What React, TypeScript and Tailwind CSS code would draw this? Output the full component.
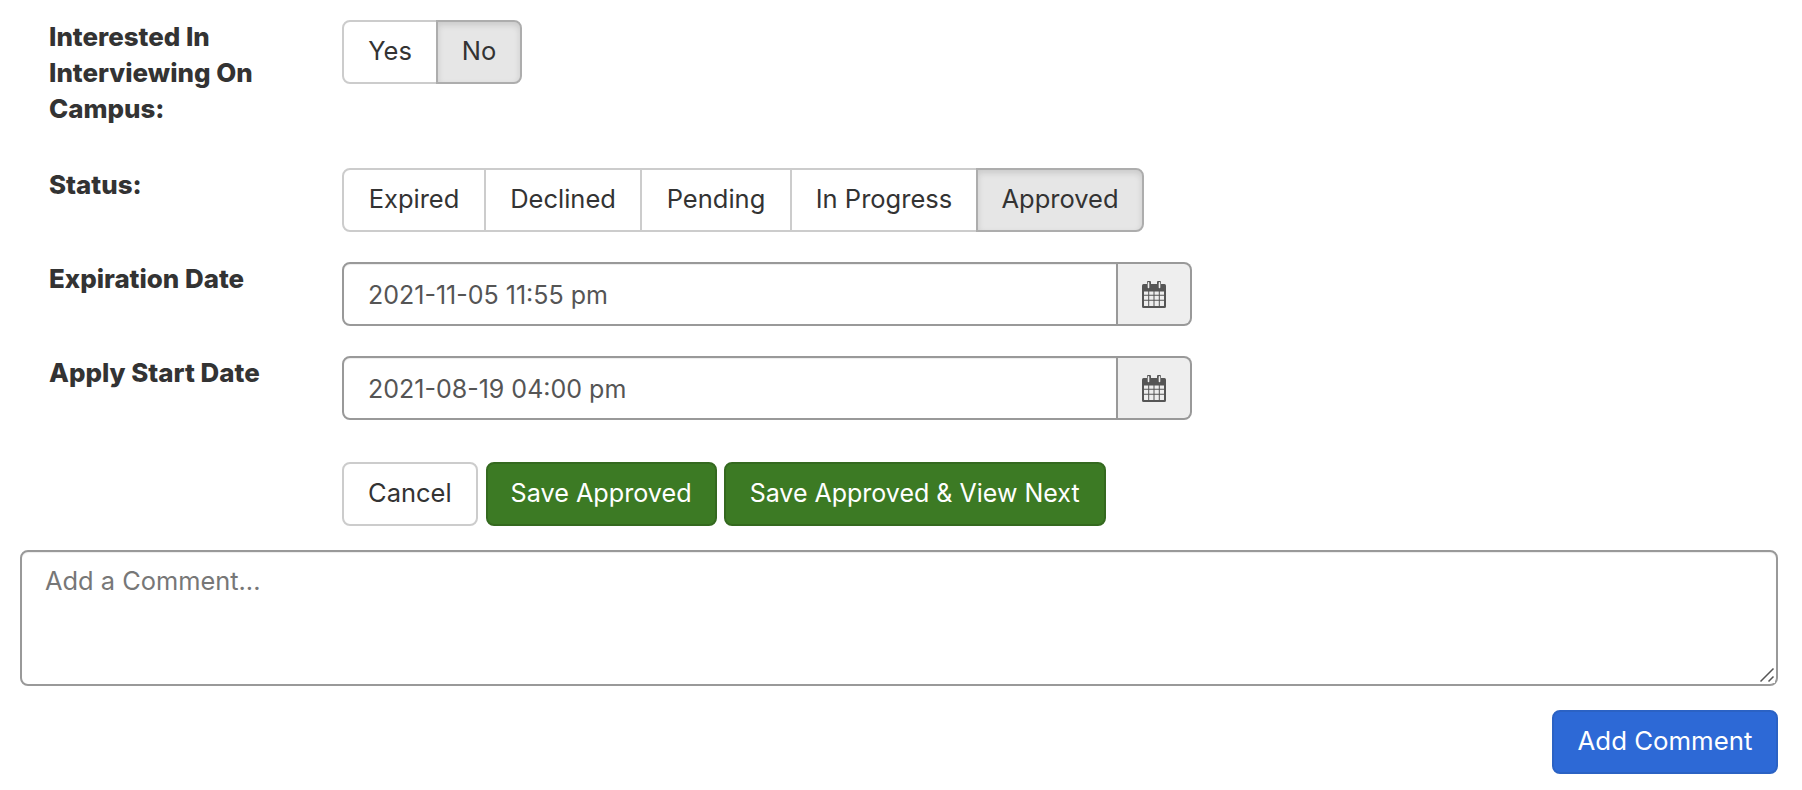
const CalendarIcon = () => (
  <svg width="24" height="27" viewBox="0 0 24 26" preserveAspectRatio="none" className="text-[#555]">
    <path
      fill="currentColor"
      fillRule="evenodd"
      d="M5 1.5a2 2 0 0 1 4 0V3h6V1.5a2 2 0 0 1 4 0V3h3.5A1.5 1.5 0 0 1 24 4.5v20a1.5 1.5 0 0 1-1.5 1.5h-21A1.5 1.5 0 0 1 0 24.500v-20A1.500 1.500 0 0 1 1.500 3H5zM6.500 1a.8.8 0 0 0-.8.8v4.400a.8.8 0 0 0 1.600 0V1.800A.8.8 0 0 0 6.500 1zm11 0a.8.8 0 0 0-.8.8v4.400a.8.8 0 0 0 1.600 0V1.800a.8.8 0 0 0-.8-.8zM2 10v3.200h4.200V10zm5.200 0v3.200h4.300V10zm5.300 0v3.200h4.300V10zm5.300 0v3.200H22V10zM2 14.200v3.800h4.200v-3.800zm5.200 0v3.800h4.300v-3.800zm5.300 0v3.800h4.300v-3.800zm5.300 0v3.800H22v-3.800zM2 19v4.500c0 .3.200.5.500.5h3.700v-5zm5.200 0v5h4.300v-5zm5.300 0v5h4.300v-5zm5.300 0v5h3.700c.3 0 .5-.2.500-.5V19z"
    />
  </svg>
);

const ToggleGroup = ({ options, active }: { options: [string, string][]; active: string }) => (
  <div className="flex">
    {options.map(([option, width], i) => (
      <button
        key={option}
        className={`h-[64px] pb-[2px] ${width} border-2 text-[25.5px] text-[#333] -ml-[2px] first:ml-0 ${
          i === 0 ? "rounded-l-[8px]" : ""
        } ${i === options.length - 1 ? "rounded-r-[8px]" : ""} ${
          option === active
            ? "bg-[#e6e6e6] border-[#adadad] shadow-[inset_0_3px_6px_rgba(0,0,0,0.125)] relative z-10"
            : "bg-white border-[#ccc]"
        }`}
      >
        {option}
      </button>
    ))}
  </div>
);

const DateField = ({ value }: { value: string }) => (
  <div className="flex w-[850px] h-[64px]">
    <input
      readOnly
      value={value}
      className="flex-1 min-w-0 pt-[3px] px-[24px] border-2 border-[#999] rounded-l-[8px] text-[25px] text-[#555] bg-white shadow-[inset_0_1px_1px_rgba(0,0,0,0.075)] outline-none"
    />
    <div className="w-[74px] flex items-center justify-center bg-[#eee] border-2 border-l-0 border-[#999] rounded-r-[8px]">
      <CalendarIcon />
    </div>
  </div>
);

const Row = ({
  label,
  className,
  children,
}: {
  label: React.ReactNode;
  className: string;
  children: React.ReactNode;
}) => (
  <div className={`flex ${className}`}>
    <div className="w-[322px] shrink-0 pl-[29px] pr-[40px] text-[25.9px] leading-[36px] font-extrabold text-[#333]">
      {label}
    </div>
    {children}
  </div>
);

export default function App() {
  return (
    <div className="w-[1802px] h-[790px] bg-white px-[20px] pt-[19px] font-['Inter',sans-serif] overflow-hidden">
      <Row label="Interested In Interviewing On Campus:" className="mb-[40px]">
        <div className="mt-[1px]">
          <ToggleGroup
            options={[
              ["Yes", "w-[96px]"],
              ["No", "w-[86px]"],
            ]}
            active="No"
          />
        </div>
      </Row>
      <Row label="Status:" className="mb-[29px]">
        <div className="mt-[1px]">
          <ToggleGroup
            options={[
              ["Expired", "w-[144px]"],
              ["Declined", "w-[158px]"],
              ["Pending", "w-[152px]"],
              ["In Progress", "w-[188px]"],
              ["Approved", "w-[168px]"],
            ]}
            active="Approved"
          />
        </div>
      </Row>
      <Row label="Expiration Date" className="mb-[29px]">
        <div className="mt-[1px]">
          <DateField value="2021-11-05 11:55 pm" />
        </div>
      </Row>
      <Row label="Apply Start Date" className="mb-[42px]">
        <div className="mt-[1px]">
          <DateField value="2021-08-19 04:00 pm" />
        </div>
      </Row>
      <div className="flex pl-[322px] mb-[24px]">
        <button className="h-[64px] pb-[2px] mr-[8px] px-[24px] border-2 border-[#ccc] rounded-[8px] bg-white text-[25.5px] text-[#333]">
          Cancel
        </button>
        <button className="h-[64px] mr-[7px] w-[231px] border-2 border-[#34691f] rounded-[8px] bg-[#3c7a24] text-[25.2px] text-white">
          Save Approved
        </button>
        <button className="h-[64px] px-[24px] border-2 border-[#34691f] rounded-[8px] bg-[#3c7a24] text-[25px] text-white">
          Save Approved &amp; View Next
        </button>
      </div>
      <div className="relative w-[1758px] h-[136px]">
        <textarea
          placeholder="Add a Comment..."
          className="block w-full h-full px-[23px] py-[11px] border-2 border-[#999] rounded-[8px] text-[25.4px] leading-[36px] text-[#555] placeholder:text-[#777] shadow-[inset_0_1px_1px_rgba(0,0,0,0.075)] outline-none"
        />
        <svg width="16" height="16" viewBox="0 0 16 16" className="absolute right-[3px] bottom-[3px] pointer-events-none bg-white">
          <path d="M14.500 1.500 1.500 14.500M14.500 9.500 9.500 14.500" stroke="#555" strokeWidth="1.500" fill="none" />
        </svg>
      </div>
      <div className="flex justify-end w-[1758px] mt-[24px]">
        <button className="h-[64px] pb-[2px] w-[226px] border-2 border-[#2b62c4] rounded-[8px] bg-[#2d69d6] text-[25.8px] text-white">
          Add Comment
        </button>
      </div>
    </div>
  );
}
